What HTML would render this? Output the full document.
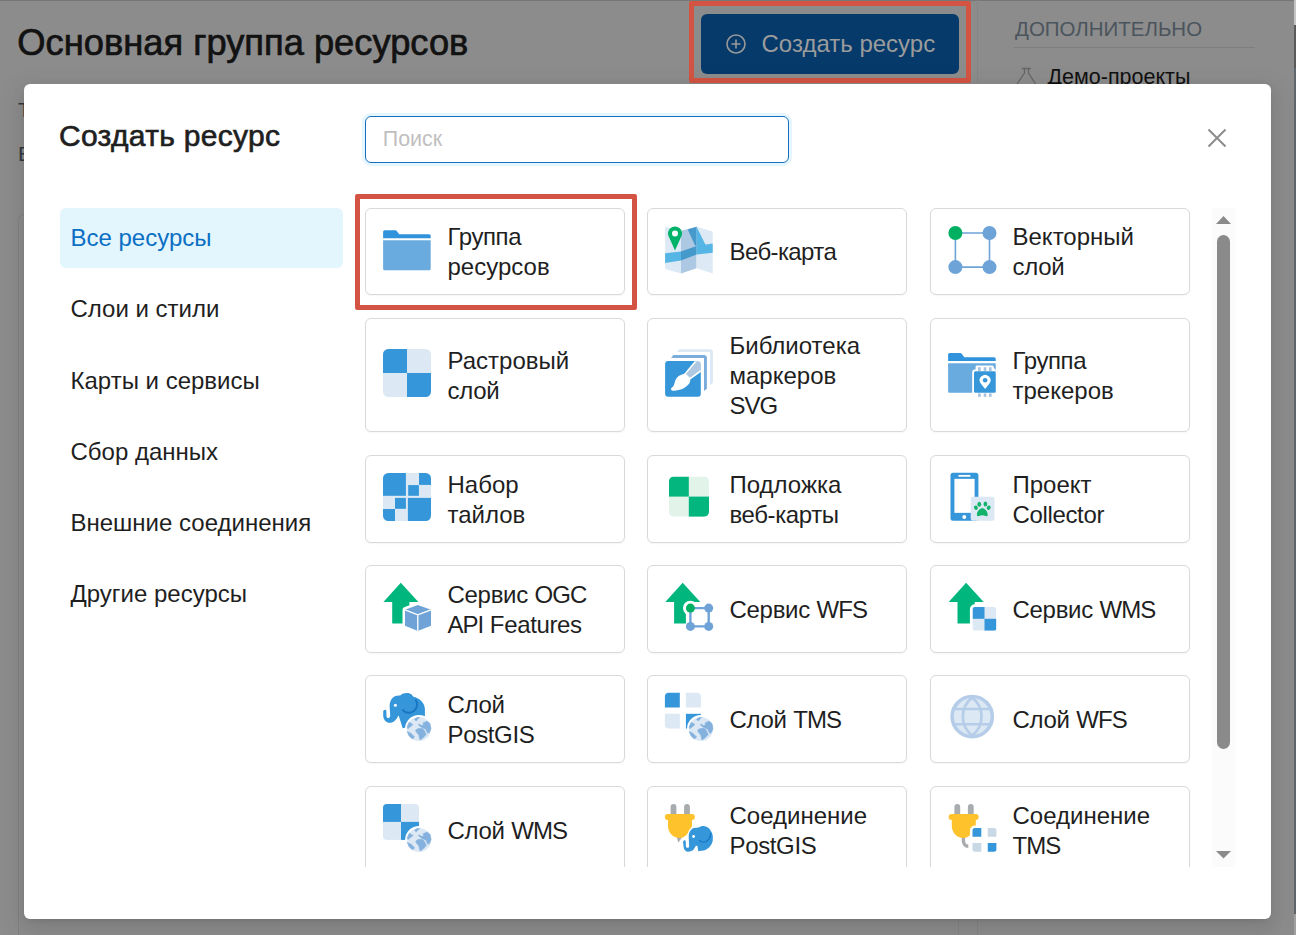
<!DOCTYPE html>
<html><head><meta charset="utf-8"><title>Создать ресурс</title>
<style>
html,body{margin:0;padding:0}
body{width:1296px;height:935px;overflow:hidden;position:relative;background:#8c8c8c;font-family:"Liberation Sans", sans-serif}
.t{position:absolute;white-space:nowrap}
.a{position:absolute}
.card{position:absolute;box-sizing:border-box;border:1px solid #d9d9d9;border-radius:6px;background:#fff;box-shadow:0 1px 2px rgba(0,0,0,0.04)}
svg{position:absolute;overflow:visible}
</style></head><body>

<div class="a" style="left:0;top:0;width:1296px;height:1px;background:#767676"></div>
<div class="t" style="left:17.3px;top:24.85px;font-size:36.3px;line-height:36.3px;color:#121212;-webkit-text-stroke:0.7px #121212;">Основная группа ресурсов</div>
<div class="a" style="left:958px;top:90px;width:1px;height:845px;background:#858585"></div>
<div class="a" style="left:977px;top:0;width:1px;height:935px;background:#858585"></div>
<div class="a" style="left:701px;top:14px;width:258px;height:60px;background:#053a6b;border-radius:6px"></div>
<svg style="left:726px;top:34px" width="20" height="20" viewBox="0 0 20 20"><circle cx="10" cy="10" r="9" fill="none" stroke="#9a9a9a" stroke-width="1.6"/><path d="M10 5.5V14.5M5.5 10H14.5" stroke="#9a9a9a" stroke-width="1.6"/></svg>
<div class="t" style="left:761.5px;top:32.30px;font-size:24px;line-height:24px;color:#9c9c9c;">Создать ресурс</div>
<div class="a" style="left:689px;top:1px;width:282px;height:82px;box-sizing:border-box;border:5px solid #d35443;border-radius:2px"></div>
<div class="t" style="left:1015px;top:19.25px;font-size:20.5px;line-height:20.5px;color:#4b545c;">ДОПОЛНИТЕЛЬНО</div>
<div class="a" style="left:1014px;top:47px;width:241px;height:1px;background:#7e7e7e"></div>
<svg style="left:1000px;top:60px" width="50" height="30" viewBox="1000 60 50 30"><path d="M1021.9 68.5H1030.8M1024.5 69V73L1017 84M1028.5 69V73L1035.5 84" fill="none" stroke="#666" stroke-width="1.3"/></svg>
<div class="t" style="left:1047.5px;top:66.75px;font-size:21.5px;line-height:21.5px;color:#111;">Демо-проекты</div>
<div class="t" style="left:18px;top:99.00px;font-size:21px;line-height:21px;color:#34393e;">Т</div>
<div class="t" style="left:18px;top:143.30px;font-size:21px;line-height:21px;color:#34393e;">В</div>
<div class="a" style="left:1294px;top:0;width:2px;height:25px;background:#c4c4c4"></div>
<div class="a" style="left:1294px;top:25px;width:2px;height:43px;background:#5a5a5a"></div>
<div class="a" style="left:1294px;top:68px;width:2px;height:846px;background:#5f666c"></div>
<div class="a" style="left:18px;top:214px;width:40px;height:800px;box-sizing:border-box;border-left:1px solid #818181;border-top:1px solid #818181;border-top-left-radius:6px"></div>
<div class="a" style="left:1294px;top:914px;width:2px;height:21px;background:#a0a0a0"></div>
<div class="a" style="left:24px;top:84px;width:1247px;height:835px;background:#fff;border-radius:6px;box-shadow:0 6px 16px 0 rgba(0,0,0,0.08),0 3px 6px -4px rgba(0,0,0,0.12),0 9px 28px 8px rgba(0,0,0,0.05)"></div>
<div class="t" style="left:59.0px;top:121.10px;font-size:30px;line-height:30px;color:#1f1f1f;-webkit-text-stroke:0.65px #1f1f1f;letter-spacing:0.3px;">Создать ресурс</div>
<div class="a" style="left:365px;top:116px;width:424px;height:47px;box-sizing:border-box;border:1.4px solid #1570c0;border-radius:6px;background:#fff;box-shadow:0 0 0 3px #e5f6fe"></div>
<div class="t" style="left:382.8px;top:129.00px;font-size:21.4px;line-height:21.4px;color:#bfbfbf;">Поиск</div>
<svg style="left:1207px;top:128px" width="20" height="20" viewBox="0 0 20 20"><path d="M1.5 1.5L18.5 18.5M18.5 1.5L1.5 18.5" stroke="#8c8c8c" stroke-width="2"/></svg>
<div class="a" style="left:60px;top:208px;width:283px;height:60px;background:#e3f5fd;border-radius:6px"></div>
<div class="t" style="left:70.5px;top:225.80px;font-size:24px;line-height:24px;color:#0b6fc4;">Все ресурсы</div>
<div class="t" style="left:70.5px;top:296.70px;font-size:24px;line-height:24px;color:#1f1f1f;">Слои и стили</div>
<div class="t" style="left:70.5px;top:368.80px;font-size:24px;line-height:24px;color:#1f1f1f;">Карты и сервисы</div>
<div class="t" style="left:70.5px;top:439.80px;font-size:24px;line-height:24px;color:#1f1f1f;">Сбор данных</div>
<div class="t" style="left:70.5px;top:510.70px;font-size:24px;line-height:24px;color:#1f1f1f;">Внешние соединения</div>
<div class="t" style="left:70.5px;top:581.70px;font-size:24px;line-height:24px;color:#1f1f1f;">Другие ресурсы</div>
<div class="a" style="left:355px;top:208px;width:860px;height:659px;overflow:hidden">
<div class="card" style="left:10px;top:0px;width:260px;height:87px"></div>
<div class="t" style="left:92.5px;top:14.00px;font-size:24px;line-height:30px;color:#1f1f1f"><span style="letter-spacing:-0.4px">Группа</span></div>
<div class="t" style="left:92.5px;top:44.00px;font-size:24px;line-height:30px;color:#1f1f1f">ресурсов</div>
<svg style="left:27.5px;top:17.50px" width="48" height="48" viewBox="0 0 48 48"><path d="M0.1 12.15V5.85Q0.1 4.35 1.6 4.35H12.3Q13.2 4.35 13.7 5.1L16.3 8.25H46.2Q47.7 8.25 47.7 9.75V12.15Z" fill="#3193db"/><path d="M0.1 14.25H47.7V42.65Q47.7 44.15 46.2 44.15H1.6Q0.1 44.15 0.1 42.65Z" fill="#6aabdf"/></svg>
<div class="card" style="left:292px;top:0px;width:260px;height:87px"></div>
<div class="t" style="left:374.5px;top:29.00px;font-size:24px;line-height:30px;color:#1f1f1f"><span style="letter-spacing:-0.6px">Веб-карта</span></div>
<svg style="left:309.5px;top:17.50px" width="48" height="48" viewBox="0 0 48 48"><path d="M0.1 0.75L16 4.65V47.45L0.1 42.95Z" fill="#dde9f5"/><path d="M16 4.65L31.6 0.75V42.35L16 47.45Z" fill="#adc8e2"/><path d="M31.6 0.75L47.7 5.55V47.45L31.6 42.35Z" fill="#dde9f5"/><path d="M0.1 27.35L16 25.55V34.55L0.1 36.95Z" fill="#55b5e5"/><path d="M16 25.55L31.6 19.95V28.55L16 34.55Z" fill="#4599cb"/><path d="M31.6 19.95L47.7 17.55V26.75L31.6 28.55Z" fill="#55b5e5"/><path d="M22.8 3.45L31.6 0.75V19.95L30 19.6Z" fill="#4599cb"/><path d="M31.6 0.75L40.6 19L31.6 21Z" fill="#55b5e5"/><path d="M10 24.6L4.3 11.8A7.1 7.1 0 1 1 15.7 11.8Z" fill="#00b36b"/><circle cx="10" cy="7.4" r="3" fill="#fff"/></svg>
<div class="card" style="left:575px;top:0px;width:260px;height:87px"></div>
<div class="t" style="left:657.5px;top:14.00px;font-size:24px;line-height:30px;color:#1f1f1f">Векторный</div>
<div class="t" style="left:657.5px;top:44.00px;font-size:24px;line-height:30px;color:#1f1f1f"><span style="letter-spacing:-0.3px">слой</span></div>
<svg style="left:592.5px;top:17.50px" width="48" height="48" viewBox="0 0 48 48"><path d="M7.4 7H41.5V41.1H7.4Z" fill="none" stroke="#6ea3d7" stroke-width="1.6"/><circle cx="41.5" cy="7" r="7" fill="#6ea3d7"/><circle cx="7.4" cy="41.1" r="7" fill="#6ea3d7"/><circle cx="41.5" cy="41.1" r="7" fill="#6ea3d7"/><circle cx="7.4" cy="7" r="7" fill="#00b062"/></svg>
<div class="card" style="left:10px;top:110px;width:260px;height:114px"></div>
<div class="t" style="left:92.5px;top:137.50px;font-size:24px;line-height:30px;color:#1f1f1f">Растровый</div>
<div class="t" style="left:92.5px;top:167.50px;font-size:24px;line-height:30px;color:#1f1f1f"><span style="letter-spacing:-0.3px">слой</span></div>
<svg style="left:27.5px;top:141.00px" width="48" height="48" viewBox="0 0 48 48"><defs><clipPath id="cr1"><rect x="0" y="0" width="48" height="48" rx="5.5"/></clipPath></defs><g clip-path="url(#cr1)"><rect width="48" height="48" fill="#dce8f4"/><rect x="0" y="0" width="24" height="24" fill="#3596da"/><rect x="24" y="24" width="24" height="24" fill="#3596da"/></g></svg>
<div class="card" style="left:292px;top:110px;width:260px;height:114px"></div>
<div class="t" style="left:374.5px;top:122.50px;font-size:24px;line-height:30px;color:#1f1f1f">Библиотека</div>
<div class="t" style="left:374.5px;top:152.50px;font-size:24px;line-height:30px;color:#1f1f1f">маркеров</div>
<div class="t" style="left:374.5px;top:182.50px;font-size:24px;line-height:30px;color:#1f1f1f"><span style="letter-spacing:-1.0px">SVG</span></div>
<svg style="left:309.5px;top:141.00px" width="48" height="48" viewBox="0 0 48 48"><path d="M14.3 0.15H45Q47.9 0.15 47.9 3V33.8L45 36.15V3H11.96Z" fill="#dce8f4"/><path d="M8.4 6H39Q41.9 6 41.9 8.9V39.7L39 42V8.9H6.1Z" fill="#7aaddc"/><rect x="0.1" y="12" width="35.7" height="35.85" rx="3" fill="#3596da"/><path d="M29.6 12.27H35.8V23.1L25.3 30.6C25.5 33 24.5 35.5 20.6 38.1C17.5 40.3 14.3 41.1 11 41.5C9 41.8 7 41.9 6.3 41C5.8 40 6 39.2 7 38.6C8.6 37.6 9.5 35 10.1 32.1C11 29 13.5 26.5 17 25.5C18 25.2 19.3 24.8 19.9 23.9Z" fill="#fff"/><path d="M32.6 12.3Q35.8 12.5 35.8 15.5V20.7L25.1 28.8L21 25L31.1 13Q31.7 12.4 32.6 12.3Z" fill="#adc8e0"/></svg>
<div class="card" style="left:575px;top:110px;width:260px;height:114px"></div>
<div class="t" style="left:657.5px;top:137.50px;font-size:24px;line-height:30px;color:#1f1f1f"><span style="letter-spacing:-0.4px">Группа</span></div>
<div class="t" style="left:657.5px;top:167.50px;font-size:24px;line-height:30px;color:#1f1f1f">трекеров</div>
<svg style="left:592.5px;top:141.00px" width="48" height="48" viewBox="0 0 48 48"><g transform="translate(-0.6 0)"><path d="M0.7 12.05V5.55Q0.7 4.05 2.2 4.05H12.9Q13.8 4.05 14.3 4.8L16.9 8.25H46.8Q48.3 8.25 48.3 9.75V12.05Z" fill="#3193db"/><path d="M0.7 14.35H48.3V43.75H1.8Q0.7 43.75 0.7 42.25Z" fill="#6aabdf"/><path d="M29.6 16.4H44.8Q46.4 16.4 46.4 18V19.3Q48.3 20 48.3 21V45.2H24.8V23.2Q24.8 20.6 27.2 20.6H28.2V17.8Q28.2 16.4 29.6 16.4Z" fill="#fff"/><g fill="#a6c3e0"><rect x="30.7" y="18.2" width="2.6" height="3.8"/><rect x="36.3" y="18.2" width="2.6" height="3.8"/><rect x="41.6" y="18.2" width="2.6" height="3.8"/><rect x="30.7" y="44.4" width="2.6" height="3.5"/><rect x="36.3" y="44.4" width="2.6" height="3.5"/><rect x="41.6" y="44.4" width="2.6" height="3.5"/></g><rect x="26.6" y="22.3" width="21.7" height="21.5" rx="1.5" fill="#3596da"/><path d="M37.7 39.95L33.2 34.3A5.4 5.4 0 1 1 42.2 34.3Z" fill="#fff"/><circle cx="37.7" cy="31.3" r="2.3" fill="#3596da"/></g></svg>
<div class="card" style="left:10px;top:247px;width:260px;height:88px"></div>
<div class="t" style="left:92.5px;top:261.50px;font-size:24px;line-height:30px;color:#1f1f1f">Набор</div>
<div class="t" style="left:92.5px;top:291.50px;font-size:24px;line-height:30px;color:#1f1f1f">тайлов</div>
<svg style="left:27.5px;top:265.00px" width="48" height="48" viewBox="0 0 48 48"><defs><clipPath id="ct1"><rect x="0" y="0" width="48" height="48" rx="5.5"/></clipPath></defs><g clip-path="url(#ct1)"><rect width="48" height="48" fill="#dce8f4"/><g fill="#3596da"><rect x="0" y="0" width="22.9" height="22.8"/><rect x="36" y="0" width="12" height="11.9"/><rect x="25.2" y="12.1" width="10.7" height="10.7"/><rect x="12" y="24.9" width="10.9" height="10.9"/><rect x="0" y="36" width="12" height="12"/><rect x="24.9" y="24.9" width="23.1" height="23.1"/></g></g></svg>
<div class="card" style="left:292px;top:247px;width:260px;height:88px"></div>
<div class="t" style="left:374.5px;top:261.50px;font-size:24px;line-height:30px;color:#1f1f1f">Подложка</div>
<div class="t" style="left:374.5px;top:291.50px;font-size:24px;line-height:30px;color:#1f1f1f"><span style="letter-spacing:-0.4px">веб-карты</span></div>
<svg style="left:309.5px;top:265.00px" width="48" height="48" viewBox="0 0 48 48"><defs><clipPath id="cb1"><rect x="3.9" y="3.55" width="40.1" height="40.2" rx="5"/></clipPath></defs><g clip-path="url(#cb1)"><rect x="3.9" y="3.55" width="40.1" height="40.2" fill="#e2f4ea"/><rect x="3.9" y="3.55" width="19.9" height="20.05" fill="#03b67d"/><rect x="23.8" y="23.6" width="20.2" height="20.15" fill="#03b67d"/></g></svg>
<div class="card" style="left:575px;top:247px;width:260px;height:88px"></div>
<div class="t" style="left:657.5px;top:261.50px;font-size:24px;line-height:30px;color:#1f1f1f">Проект</div>
<div class="t" style="left:657.5px;top:291.50px;font-size:24px;line-height:30px;color:#1f1f1f"><span style="letter-spacing:-0.35px">Collector</span></div>
<svg style="left:592.5px;top:265.00px" width="48" height="48" viewBox="0 0 48 48"><rect x="2.5" y="-0.25" width="27.9" height="48.1" rx="2.5" fill="#3596da"/><rect x="6.4" y="5.85" width="20.2" height="34" fill="#fff"/><rect x="10.5" y="1.95" width="11.9" height="1.8" fill="#fff"/><circle cx="16.3" cy="44.05" r="2" fill="#fff"/><rect x="22.7" y="23.85" width="23.8" height="24" rx="2" fill="#dce8f4"/><g fill="#14b36b"><path d="M34.3 35.3C31.5 35.3 29.3 38.5 28.9 41.2C28.7 42.8 29.8 43.6 31 43.1C32.2 42.6 33.3 42.3 34.3 42.3C35.3 42.3 36.4 42.6 37.6 43.1C38.8 43.6 39.9 42.8 39.7 41.2C39.3 38.5 37.1 35.3 34.3 35.3Z"/><ellipse cx="27.9" cy="34.8" rx="1.8" ry="2.2" transform="rotate(-25 27.9 34.8)"/><ellipse cx="31.3" cy="31.2" rx="1.9" ry="2.5"/><ellipse cx="37.4" cy="30.9" rx="1.9" ry="2.5"/><ellipse cx="40.7" cy="34.8" rx="1.8" ry="2.2" transform="rotate(25 40.7 34.8)"/></g></svg>
<div class="card" style="left:10px;top:357px;width:260px;height:88px"></div>
<div class="t" style="left:92.5px;top:371.50px;font-size:24px;line-height:30px;color:#1f1f1f"><span style="letter-spacing:-0.3px">Сервис</span> <span style="letter-spacing:-1.0px">OGC</span></div>
<div class="t" style="left:92.5px;top:401.50px;font-size:24px;line-height:30px;color:#1f1f1f"><span style="letter-spacing:-1.0px">API</span> <span style="letter-spacing:-0.35px">Features</span></div>
<svg style="left:27.5px;top:375.00px" width="48" height="48" viewBox="0 0 48 48"><path transform="translate(0 0)" d="M17.8 -0.3L35.4 19H26.4V40.5H9.2V19H0.4Z" fill="#00b67d"/><path d="M34.8 21.9L48 26.7V42.7L34.8 47.9L22 42.7V26.7Z" fill="#fff" stroke="#fff" stroke-width="5" stroke-linejoin="round"/><path d="M34.8 21.9L48 26.7V42.7L34.8 47.9L22 42.7V26.7Z" fill="#6fa3d8"/><path d="M22 26.9L34.8 31.8L48 26.9M34.8 31.8V47.9" fill="none" stroke="#fff" stroke-width="1.3"/></svg>
<div class="card" style="left:292px;top:357px;width:260px;height:88px"></div>
<div class="t" style="left:374.5px;top:386.50px;font-size:24px;line-height:30px;color:#1f1f1f"><span style="letter-spacing:-0.3px">Сервис</span> <span style="letter-spacing:-1.0px">WFS</span></div>
<svg style="left:309.5px;top:375.00px" width="48" height="48" viewBox="0 0 48 48"><path transform="translate(-0.1 0)" d="M17.8 -0.3L35.4 19H26.4V40.5H9.2V19H0.4Z" fill="#00b67d"/><circle cx="25.4" cy="25.1" r="7.4" fill="#fff"/><rect x="20.9" y="25.1" width="30" height="25" fill="#fff"/><path d="M25.4 25.1H43.7V43.4H25.4Z" fill="none" stroke="#6fa3d8" stroke-width="2.4"/><circle cx="43.7" cy="25.1" r="4.5" fill="#6fa3d8"/><circle cx="25.4" cy="43.4" r="4.5" fill="#6fa3d8"/><circle cx="43.7" cy="43.4" r="4.5" fill="#6fa3d8"/><circle cx="25.4" cy="25.1" r="4.5" fill="#00b062"/></svg>
<div class="card" style="left:575px;top:357px;width:260px;height:88px"></div>
<div class="t" style="left:657.5px;top:386.50px;font-size:24px;line-height:30px;color:#1f1f1f"><span style="letter-spacing:-0.3px">Сервис</span> <span style="letter-spacing:-1.0px">WMS</span></div>
<svg style="left:592.5px;top:375.00px" width="48" height="48" viewBox="0 0 48 48"><path transform="translate(0.3 0)" d="M17.8 -0.3L35.4 19H26.4V40.5H9.2V19H0.4Z" fill="#00b67d"/><rect x="21.9" y="21.3" width="29" height="29" rx="5" fill="#fff"/><defs><clipPath id="cw1"><rect x="24.5" y="23.9" width="23.9" height="23.8" rx="2.5"/></clipPath></defs><g clip-path="url(#cw1)"><rect x="24.5" y="23.9" width="23.9" height="23.8" fill="#dce8f4"/><rect x="24.5" y="23.9" width="12" height="11.9" fill="#3596da"/><rect x="36.5" y="35.8" width="11.9" height="11.9" fill="#3596da"/></g></svg>
<div class="card" style="left:10px;top:467px;width:260px;height:88px"></div>
<div class="t" style="left:92.5px;top:481.50px;font-size:24px;line-height:30px;color:#1f1f1f"><span style="letter-spacing:-0.3px">Слой</span></div>
<div class="t" style="left:92.5px;top:511.50px;font-size:24px;line-height:30px;color:#1f1f1f"><span style="letter-spacing:-0.35px">PostGIS</span></div>
<svg style="left:27.5px;top:485.00px" width="48" height="48" viewBox="0 0 48 48"><path d="M1.9 16.9C2.8 16.6 3.4 17.3 3.4 18.2L3.4 22.5C3.4 24 4 25.1 5.2 25.1C6.5 25.1 7.2 24 7.2 22.5L6.6 13.1C6.6 8 9.5 3.5 13.3 2.8C15 2.5 16.5 2.5 17.5 2.2C19 0.8 21.5 0 23.9 0.1C26 0.1 27.8 0.8 28.7 1.6C29.2 2.6 30 3.5 30.4 3.7C36 5 41.5 9 41.9 16L41.9 30L19.7 35.3L15.8 22.9C15.3 22.7 15 23 15 23.2C13.5 26.5 10.5 29.8 6.8 29.8C3 29.8 0.2 26.5 0.2 22.5L0.2 18.2C0.2 17.5 1 16.9 1.9 16.9Z" fill="#3596da"/><path d="M19.4 16.6A8.2 8.2 0 0 0 32.4 6.6" fill="none" stroke="#1a74c2" stroke-width="1.9"/><circle cx="12.4" cy="12.25" r="1.5" fill="#fff"/><circle cx="36" cy="36" r="14" fill="#fff"/><g transform="translate(0 0.3500000000000014)"><circle cx="36" cy="35.65" r="12" fill="#dce8f4"/><g fill="#84b1de" stroke="#84b1de" stroke-width="0.6" stroke-linejoin="round"><path d="M31.6 26C32.5 24.5 35 24 36.5 24.3C35.5 25.5 34 26.2 33.3 27.6C32.5 27.2 31.8 26.8 31.6 26Z"/><path d="M26.2 28.9L30 31.15L24.9 35.3L24.1 33.7Z"/><path d="M40 29.55L44.1 27.8L47 30.2L48 35.3L46.4 39.2L44.5 39.8L42.9 36L40 34.7L37.1 33.1L35.2 31.2L36.4 30.8L38.7 32.4L40.6 31.15Z"/><path d="M32.6 36.9L34.8 35.3L39 35L41.2 36.9L42.5 39.8L43.2 41.1L40.9 43.7L38 46.2L36.8 46.2L35.8 41.75L33.2 38.5Z"/><path d="M24.2 38.2L27.8 39.8L31.6 43.7L29.4 45.6L25.9 42.4Z"/></g></g></svg>
<div class="card" style="left:292px;top:467px;width:260px;height:88px"></div>
<div class="t" style="left:374.5px;top:496.50px;font-size:24px;line-height:30px;color:#1f1f1f"><span style="letter-spacing:-0.3px">Слой</span> <span style="letter-spacing:-1.0px">TMS</span></div>
<svg style="left:309.5px;top:485.00px" width="48" height="48" viewBox="0 0 48 48"><path d="M3.9 -0.35H14.8V14.6H-0.1V3.65Q-0.1 -0.35 3.9 -0.35Z" fill="#3596da"/><path d="M20.9 -0.35H31.9Q35.9 -0.35 35.9 3.65V14.6H20.9V-0.35Z" fill="#dce8f4"/><path d="M-0.1 20.8H14.8V35.6H3.9Q-0.1 35.6 -0.1 31.6V20.8Z" fill="#dce8f4"/><path d="M20.9 20.8H35.9V35.6H20.9V20.8Z" fill="#3596da"/><circle cx="36" cy="36" r="14" fill="#fff"/><g transform="translate(0 0.3500000000000014)"><circle cx="36" cy="35.65" r="12" fill="#dce8f4"/><g fill="#84b1de" stroke="#84b1de" stroke-width="0.6" stroke-linejoin="round"><path d="M31.6 26C32.5 24.5 35 24 36.5 24.3C35.5 25.5 34 26.2 33.3 27.6C32.5 27.2 31.8 26.8 31.6 26Z"/><path d="M26.2 28.9L30 31.15L24.9 35.3L24.1 33.7Z"/><path d="M40 29.55L44.1 27.8L47 30.2L48 35.3L46.4 39.2L44.5 39.8L42.9 36L40 34.7L37.1 33.1L35.2 31.2L36.4 30.8L38.7 32.4L40.6 31.15Z"/><path d="M32.6 36.9L34.8 35.3L39 35L41.2 36.9L42.5 39.8L43.2 41.1L40.9 43.7L38 46.2L36.8 46.2L35.8 41.75L33.2 38.5Z"/><path d="M24.2 38.2L27.8 39.8L31.6 43.7L29.4 45.6L25.9 42.4Z"/></g></g></svg>
<div class="card" style="left:575px;top:467px;width:260px;height:88px"></div>
<div class="t" style="left:657.5px;top:496.50px;font-size:24px;line-height:30px;color:#1f1f1f"><span style="letter-spacing:-0.3px">Слой</span> <span style="letter-spacing:-1.0px">WFS</span></div>
<svg style="left:592.5px;top:485.00px" width="48" height="48" viewBox="0 0 48 48"><circle cx="24.2" cy="23.6" r="20.1" fill="#dce8f4" stroke="#b5cde8" stroke-width="3.6"/><path d="M24.2 4.6A24 24 0 0 0 24.2 42.6A24 24 0 0 0 24.2 4.6Z" fill="none" stroke="#b5cde8" stroke-width="2.6"/><path d="M4 16H44.4M4 31.3H44.4" stroke="#b5cde8" stroke-width="2.6"/></svg>
<div class="card" style="left:10px;top:578px;width:260px;height:88px"></div>
<div class="t" style="left:92.5px;top:607.50px;font-size:24px;line-height:30px;color:#1f1f1f"><span style="letter-spacing:-0.3px">Слой</span> <span style="letter-spacing:-1.0px">WMS</span></div>
<svg style="left:27.5px;top:596.00px" width="48" height="48" viewBox="0 0 48 48"><defs><clipPath id="cm1"><rect x="0" y="0" width="36" height="35.9" rx="4"/></clipPath></defs><g clip-path="url(#cm1)"><rect width="36" height="35.9" fill="#dce8f4"/><rect x="0" y="0" width="18" height="17.9" fill="#3596da"/><rect x="18" y="17.9" width="18" height="18" fill="#3596da"/></g><circle cx="36.1" cy="35.9" r="14" fill="#fff"/><g transform="translate(0.10000000000000142 0.25)"><circle cx="36" cy="35.65" r="12" fill="#dce8f4"/><g fill="#84b1de" stroke="#84b1de" stroke-width="0.6" stroke-linejoin="round"><path d="M31.6 26C32.5 24.5 35 24 36.5 24.3C35.5 25.5 34 26.2 33.3 27.6C32.5 27.2 31.8 26.8 31.6 26Z"/><path d="M26.2 28.9L30 31.15L24.9 35.3L24.1 33.7Z"/><path d="M40 29.55L44.1 27.8L47 30.2L48 35.3L46.4 39.2L44.5 39.8L42.9 36L40 34.7L37.1 33.1L35.2 31.2L36.4 30.8L38.7 32.4L40.6 31.15Z"/><path d="M32.6 36.9L34.8 35.3L39 35L41.2 36.9L42.5 39.8L43.2 41.1L40.9 43.7L38 46.2L36.8 46.2L35.8 41.75L33.2 38.5Z"/><path d="M24.2 38.2L27.8 39.8L31.6 43.7L29.4 45.6L25.9 42.4Z"/></g></g></svg>
<div class="card" style="left:292px;top:578px;width:260px;height:88px"></div>
<div class="t" style="left:374.5px;top:592.50px;font-size:24px;line-height:30px;color:#1f1f1f">Соединение</div>
<div class="t" style="left:374.5px;top:622.50px;font-size:24px;line-height:30px;color:#1f1f1f"><span style="letter-spacing:-0.35px">PostGIS</span></div>
<svg style="left:309.5px;top:596.00px" width="48" height="48" viewBox="0 0 48 48"><g transform="translate(0 0)"><g fill="#a8acaf"><rect x="5.6" y="0.1" width="5.8" height="12" rx="2.9"/><rect x="19.1" y="0.1" width="5.8" height="12" rx="2.9"/></g><path d="M11.9 33L17.2 33L13.3 38.8Z" fill="#a8acaf"/><rect x="-0.2" y="9.95" width="30.1" height="6.05" rx="3" fill="#fec22c"/><path d="M3 15H27V22C25.5 28 20 34 14.5 34C8 34 3 28.5 3 22Z" fill="#fec22c"/></g><path d="M19.4 36.3C20.2 36.2 20.7 36.8 20.7 37.4L20.9 42.5C21.1 43.3 21.8 43.8 22.6 43.8C23.4 43.8 24.1 43.3 24.1 42.5L23.7 32.3C23.7 28 26.5 24.5 29 24.1C31 23.8 32.8 23.6 34.15 23.3C35.5 22.3 37 22 38.4 22C42.5 22.2 46.5 25.5 47.8 31.8V36.5C47 40.5 45 43 42 45C40.5 46 39.5 46.4 38.4 46.6L33.3 47.2L32.4 41.9C31.8 41.7 31.2 41.7 30.9 41.7C29.9 43 28.9 46 26.9 46.8C25.5 47.4 24 47.7 22.6 47.7C20.5 47.4 19 45.5 18.75 43.8L18.1 38.7C18.1 37.3 18.6 36.4 19.4 36.3Z" fill="#fff" stroke="#fff" stroke-width="3"/><path d="M19.4 36.3C20.2 36.2 20.7 36.8 20.7 37.4L20.9 42.5C21.1 43.3 21.8 43.8 22.6 43.8C23.4 43.8 24.1 43.3 24.1 42.5L23.7 32.3C23.7 28 26.5 24.5 29 24.1C31 23.8 32.8 23.6 34.15 23.3C35.5 22.3 37 22 38.4 22C42.5 22.2 46.5 25.5 47.8 31.8V36.5C47 40.5 45 43 42 45C40.5 46 39.5 46.4 38.4 46.6L33.3 47.2L32.4 41.9C31.8 41.7 31.2 41.7 30.9 41.7C29.9 43 28.9 46 26.9 46.8C25.5 47.4 24 47.7 22.6 47.7C20.5 47.4 19 45.5 18.75 43.8L18.1 38.7C18.1 37.3 18.6 36.4 19.4 36.3Z" fill="#3596da"/><path d="M34.15 36.1Q37.5 39.5 41.5 37.5Q45.5 35 45.7 28.8" fill="none" stroke="#1474c4" stroke-width="1.2"/><circle cx="28.6" cy="32.5" r="1.4" fill="#fff"/></svg>
<div class="card" style="left:575px;top:578px;width:260px;height:88px"></div>
<div class="t" style="left:657.5px;top:592.50px;font-size:24px;line-height:30px;color:#1f1f1f">Соединение</div>
<div class="t" style="left:657.5px;top:622.50px;font-size:24px;line-height:30px;color:#1f1f1f"><span style="letter-spacing:-1.0px">TMS</span></div>
<svg style="left:592.5px;top:596.00px" width="48" height="48" viewBox="0 0 48 48"><g transform="translate(0.8 0)"><g fill="#a8acaf"><rect x="5.6" y="0.1" width="5.8" height="12" rx="2.9"/><rect x="19.1" y="0.1" width="5.8" height="12" rx="2.9"/></g><path d="M14.6 33V36.5C14.6 40 16.5 42.3 19.5 42.3" fill="none" stroke="#a8acaf" stroke-width="3.4"/><rect x="-0.2" y="9.95" width="30.1" height="6.05" rx="3" fill="#fec22c"/><path d="M3 15H27V22C25.5 28 20 34 14.5 34C8 34 3 28.5 3 22Z" fill="#fec22c"/></g><rect x="21.9" y="21.5" width="29" height="29" rx="5" fill="#fff"/><path d="M27.0 24.1H33.3V32.7H24.5V26.6Q24.5 24.1 27.0 24.1Z" fill="#3596da"/><path d="M39.75 24.1H45.9Q48.4 24.1 48.4 26.6V32.7H39.75V24.1Z" fill="#c9d8e5"/><path d="M24.5 39.1H33.3V47.8H27.0Q24.5 47.8 24.5 45.3V39.1Z" fill="#c9d8e5"/><path d="M39.75 39.1H48.4V45.3Q48.4 47.8 45.9 47.8H39.75V39.1Z" fill="#3596da"/></svg>
</div>
<div class="a" style="left:355px;top:194px;width:282px;height:116px;box-sizing:border-box;border:5px solid #d35443;border-radius:2px"></div>
<div class="a" style="left:1212px;top:208px;width:23px;height:659px;background:#fbfbfb"></div>
<svg style="left:1212px;top:208px" width="23" height="659" viewBox="0 0 23 659"><path d="M4 16L11.5 8L19 16Z" fill="#8a8a8a"/><path d="M4 643L11.5 650.5L19 643Z" fill="#8a8a8a"/><rect x="5" y="27" width="13" height="514" rx="6.5" fill="#8a8a8a"/></svg>
</body></html>
